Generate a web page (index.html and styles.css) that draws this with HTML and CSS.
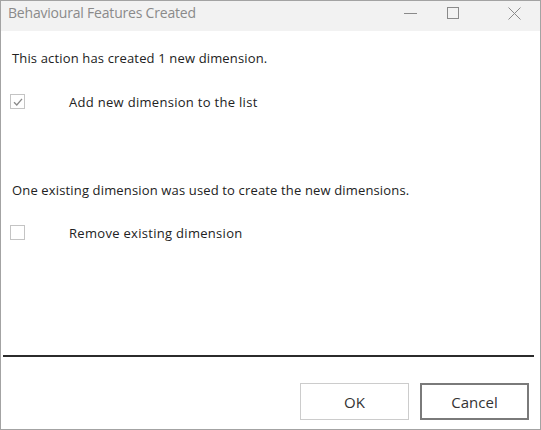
FILE: index.html
```html
<!DOCTYPE html>
<html lang="en">
<head>
  <meta charset="UTF-8" />
  <title>Behavioural Features Created</title>
  <link rel="stylesheet" href="styles.css">
</head>
<body>

  <div class="window">
    <!-- Title bar -->
    <div class="titlebar">
      <div class="title">Behavioural Features Created</div>
      <div class="controls">
        <svg class="ctl min" width="14" height="14" viewBox="0 0 14 14"><path d="M0 6.5H13" stroke="#8a8a8a" stroke-width="1"/></svg>
        <svg class="ctl max" width="14" height="14" viewBox="0 0 14 14"><rect x="0.5" y="0.5" width="11" height="11" fill="none" stroke="#8a8a8a" stroke-width="1"/></svg>
        <svg class="ctl close" width="14" height="14" viewBox="0 0 14 14"><path d="M0.5 0.5L12.5 12.5M12.5 0.5L0.5 12.5" stroke="#8a8a8a" stroke-width="1"/></svg>
      </div>
    </div>

    <!-- Body -->
    <div class="content">
      <p class="msg first">This action has created 1 new dimension.</p>
      <label class="option">
        <span class="check checked">
          <svg width="10" height="10" viewBox="0 0 10 10"><path d="M1 5.2L3.8 8L9 1.8" fill="none" stroke="#8a8a8a" stroke-width="1.3"/></svg>
        </span>
        <span class="label">Add new dimension to the list</span>
      </label>

      <p class="msg second">One existing dimension was used to create the new dimensions.</p>
      <label class="option last">
        <span class="check"></span>
        <span class="label">Remove existing dimension</span>
      </label>
    </div>

    <div class="separator"></div>

    <!-- Buttons -->
    <div class="buttons">
      <button class="btn">OK</button>
      <button class="btn default">Cancel</button>
    </div>
  </div>

</body>
</html>
```

FILE: styles.css
```css
body {
  margin: 0;
  padding: 0;
  background: #fff;
  font-family: 'Open Sans', 'Noto Sans', sans-serif;
  color: #222;
}

.window {
  width: 541px;
  height: 430px;
  box-sizing: border-box;
  border: 1px solid #a3a3a3;
  display: flex;
  flex-direction: column;
  background: #fff;
}

.titlebar {
  height: 30px;
  background: #f2f2f2;
  display: flex;
  align-items: flex-start;
  justify-content: space-between;
  padding-left: 7px;
}

.title {
  padding-top: 3px;
  font-size: 14px;
  line-height: 18px;
  color: #8a8a8a;
  letter-spacing: -0.2px;
}

.controls {
  display: flex;
  padding-top: 6px;
  padding-right: 18px;
}

.ctl {
  display: block;
}

.ctl.max {
  margin-left: 29px;
}

.ctl.close {
  margin-left: 47px;
}

.content {
  flex: 1;
  padding-left: 11px;
}

.msg {
  margin: 0;
  font-size: 13px;
  line-height: 16px;
  letter-spacing: 0.15px;
}

.msg.first {
  margin-top: 19px;
}

.msg.second {
  margin-top: 73px;
}

.option {
  display: flex;
  align-items: center;
  height: 15px;
  margin-top: 28px;
  margin-left: -2px;
}

.option.last {
  margin-top: 27px;
}

.check {
  width: 13px;
  height: 13px;
  border: 1px solid #c4c4c4;
  display: flex;
  align-items: center;
  justify-content: center;
  background: #fff;
}

.label {
  margin-left: 44px;
  font-size: 13px;
  letter-spacing: 0.3px;
}

.separator {
  height: 2px;
  background: #2b2b2b;
  margin: 0 6px 0 2px;
}

.buttons {
  display: flex;
  justify-content: flex-end;
  gap: 11px;
  padding: 26px 11px 9px 0;
}

.btn {
  width: 109px;
  height: 37px;
  box-sizing: border-box;
  background: #fff;
  border: 1px solid #cccccc;
  font-family: 'Open Sans', 'Noto Sans', sans-serif;
  font-size: 15px;
  color: #333;
}

.btn.default {
  border: 2px solid #7a7a7a;
}
```
